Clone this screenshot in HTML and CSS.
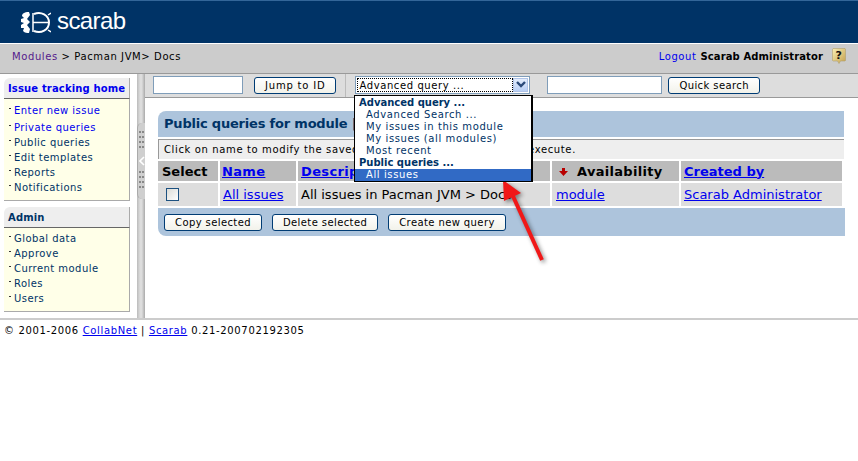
FILE: index.html
```html
<!DOCTYPE html>
<html>

<head>
    <title>Scarab - Public queries</title>

    <link rel="stylesheet" href="styles.css">
</head>

<body>
    <div class="banner">
        <svg class="beetle" width="31" height="23" viewBox="0 0 31 23">
            <path d="M9 1 C4 1 2 3 2 5 L4 7 L1 8 L1 11 L4 12 L1 14 L1 17 L4 17 L3 20 C5 22 7 22 9 22 L10 18 L7 14 L10 11 L7 8 L10 4 Z" fill="#fff"/>
            <path d="M14 3 C21 0 29 4 29 11.5 C29 19 21 23 14 20" fill="none" stroke="#fff" stroke-width="2"/>
            <path d="M13 2 V21" stroke="#fff" stroke-width="1.5"/>
            <path d="M13 11.5 H28" stroke="#fff" stroke-width="1.5"/>
            <path d="M28 4 L31 2 M28 19 L31 21" stroke="#fff" stroke-width="1.5"/>
        </svg>
        <span class="wordmark">scarab</span>
    </div>

    <div class="crumbs">
        <div><a class="visited" href="#">Modules</a> &gt; Pacman JVM&gt; Docs</div>
        <div class="user">
            <a class="plain" href="#">Logout</a> <b>Scarab Administrator</b>
            <svg class="help" width="14" height="16" viewBox="0 0 14 16">
                <defs>
                    <linearGradient id="helpFill" x1="0" y1="0" x2="1" y2="1">
                        <stop offset="0" stop-color="#f8eeb4"/>
                        <stop offset="1" stop-color="#c4a04c"/>
                    </linearGradient>
                </defs>
                <path d="M1 0.5 H13 L13.5 1 V12.5 L13 13 H8.5 L7 15.5 L5.5 13 H1 L0.5 12.5 V1 Z" fill="url(#helpFill)" stroke="#b0a070" stroke-width="0.6"/>
                <text x="7" y="11" text-anchor="middle" class="help-mark">?</text>
            </svg>
        </div>
    </div>

    <div class="middle">
        <div class="side">
            <div class="box">
                <div class="box-head"><a class="plain" href="#">Issue tracking home</a></div>
                <ul class="box-list first-list">
                    <li class="gap"><a class="plain" href="#">Enter new issue</a></li>
                    <li><a class="plain" href="#">Private queries</a></li>
                    <li><a href="#">Public queries</a></li>
                    <li><a href="#">Edit templates</a></li>
                    <li><a href="#">Reports</a></li>
                    <li><a href="#">Notifications</a></li>
                </ul>
            </div>
            <div class="box">
                <div class="box-head">Admin</div>
                <ul class="box-list">
                    <li><a href="#">Global data</a></li>
                    <li><a href="#">Approve</a></li>
                    <li><a href="#">Current module</a></li>
                    <li><a href="#">Roles</a></li>
                    <li><a href="#">Users</a></li>
                </ul>
            </div>
        </div>

        <div class="splitter">
            <div class="handle">
                <div class="dots"></div>
                <svg class="chevron" width="6" height="10" viewBox="0 0 6 10"><path d="M5 1 L1 5 L5 9" fill="none" stroke="#fff" stroke-width="1.6"/></svg>
                <div class="dots"></div>
            </div>
        </div>

        <div class="main">
            <div class="toolbar">
                <input class="field id-field" type="text">
                <button class="btn btn-jump">Jump to ID</button>
                <div class="tool-sep"></div>
                <div class="select">
                    <span class="select-text">Advanced query ...</span>
                    <span class="select-arrow">
                        <svg width="12" height="8" viewBox="0 0 12 8"><path d="M2 1 L6 5 L10 1" fill="none" stroke="#2a4a7a" stroke-width="2.4"/></svg>
                    </span>
                </div>
                <input class="field search-field" type="text">
                <button class="btn">Quick search</button>
            </div>

            <div class="menu">
                <div class="menu-group">Advanced query ...</div>
                <div class="menu-item">Advanced Search ...</div>
                <div class="menu-item">My issues in this module</div>
                <div class="menu-item">My issues (all modules)</div>
                <div class="menu-item">Most recent</div>
                <div class="menu-group">Public queries ...</div>
                <div class="menu-item current">All issues</div>
            </div>

            <div class="panel">
                <h2 class="panel-head">Public queries for module |</h2>
                <div class="note">Click on name to modify the saved query, or on the 'Run' link to execute.</div>
                <table class="queries">
                    <tr>
                        <th class="col-select">Select</th>
                        <th class="col-name"><a href="#">Name</a></th>
                        <th class="col-desc"><a href="#">Descrip</a></th>
                        <th class="col-avail">
                            <svg class="sort-arrow" width="9" height="8" viewBox="0 0 9 8"><path d="M3 0 H6 V3 H9 L4.5 8 L0 3 H3 Z" fill="#b80000"/></svg>Availability
                        </th>
                        <th class="col-by"><a href="#">Created by</a></th>
                    </tr>
                    <tr>
                        <td class="cell-check"><span class="check"></span></td>
                        <td><a href="#">All issues</a></td>
                        <td>All issues in Pacman JVM &gt; Docs</td>
                        <td class="cell-avail"><a href="#">module</a></td>
                        <td><a href="#">Scarab Administrator</a></td>
                    </tr>
                </table>
                <div class="actions">
                    <button class="btn">Copy selected</button>
                    <button class="btn">Delete selected</button>
                    <button class="btn">Create new query</button>
                </div>
            </div>

            <svg class="pointer" width="64" height="94" viewBox="0 0 64 94">
                <path d="M21 14 L51 80" stroke="#f01818" stroke-width="4"/>
                <path d="M12 0 L13 21 L30 13 Z" fill="#f01818"/>
            </svg>
        </div>
    </div>

    <div class="footer">
        &copy; 2001-2006 <a href="#">CollabNet</a> | <a href="#">Scarab</a> 0.21-200702192305
    </div>
</body>

</html>
```

FILE: styles.css
```css
body {
    margin: 0;
    background-color: #ffffff;
    color: #000000;
    font-family: "DejaVu Sans", Verdana, sans-serif;
    font-size: 10px;
    letter-spacing: 0.45px;
}

a {
    color: #0000ee;
}

.banner {
    height: 42px;
    border-top: 1px solid #336699;
    background-color: #003366;
    display: flex;
    align-items: center;
    padding-left: 20px;
    gap: 6px;
}

.wordmark {
    color: #ffffff;
    font-family: "Liberation Sans", Arial, sans-serif;
    font-size: 24px;
    letter-spacing: -0.6px;
    padding-bottom: 2px;
}

.crumbs {
    height: 30px;
    margin-top: 1px;
    background-color: #cccccc;
    border-bottom: 1px solid #999999;
    box-sizing: border-box;
    display: flex;
    justify-content: space-between;
    align-items: center;
    padding: 0 12px 5px 12px;
    letter-spacing: 0.6px;
}

.crumbs a {
    text-decoration: none;
}

.crumbs b {
    letter-spacing: 0.1px;
}

.visited {
    color: #551a8b;
}

.plain {
    text-decoration: none;
}

.user {
    display: flex;
    align-items: center;
    gap: 4px;
}

.help {
    margin-left: 5px;
}

.help-mark {
    font-size: 11px;
    font-weight: bold;
    fill: #111111;
}

.middle {
    display: flex;
    height: 244px;
    border-bottom: 2px solid #cccccc;
}

.side {
    width: 137px;
    flex: none;
    padding: 4px 0 0 4px;
    box-sizing: border-box;
}

.box {
    width: 126px;
    margin-bottom: 6px;
}

.box-head {
    height: 21px;
    line-height: 21px;
    box-sizing: border-box;
    padding-left: 4px;
    background-color: #eeeeee;
    border-bottom: 1px solid #666666;
    border-right: 1px solid #aaaaaa;
    border-top-left-radius: 6px;
    color: #003366;
    font-weight: bold;
    letter-spacing: 0.15px;
}

.box-head a {
    color: #0000ee;
}

.box-list {
    list-style: none;
    margin: 0;
    padding: 3px 0 5px 6px;
    background-color: #ffffe8;
    border-bottom: 1px solid #aaaaaa;
    border-right: 1px solid #aaaaaa;
}

.first-list {
    padding-top: 4px;
}

.box-list li {
    height: 15px;
    line-height: 15px;
    position: relative;
}

.box-list li::before {
    content: "";
    position: absolute;
    left: -1px;
    top: 5px;
    width: 2px;
    height: 1px;
    background-color: #333333;
}

.box-list li.gap {
    height: 17px;
}

.box-list li a {
    margin-left: 4px;
    text-decoration: none;
    color: #003366;
}

.box-list li a.plain {
    color: #0000ee;
}

.splitter {
    width: 8px;
    flex: none;
    background: linear-gradient(90deg, #bbbbbb, #dddddd 40%, #dddddd 60%, #aaaaaa);
    box-sizing: border-box;
    padding-top: 49px;
}

.handle {
    height: 76px;
    background-color: #cfcfcf;
    border-left: 1px solid #aaaaaa;
    border-radius: 5px 0 0 5px;
    display: flex;
    flex-direction: column;
    align-items: center;
    justify-content: space-between;
    padding: 8px 0;
    box-sizing: border-box;
}

.dots {
    width: 5px;
    height: 20px;
    background-image: linear-gradient(90deg, #888888 2px, transparent 2px, transparent 3px, #888888 3px);
    -webkit-mask-image: linear-gradient(#000 2px, transparent 2px);
    mask-image: linear-gradient(#000 2px, transparent 2px);
    -webkit-mask-size: 5px 5px;
    mask-size: 5px 5px;
}

.main {
    flex: 1;
    position: relative;
}

.toolbar {
    height: 24px;
    box-sizing: border-box;
    background-color: #dddddd;
    border-bottom: 1px solid #999999;
    display: flex;
    align-items: center;
    padding: 0 0 1px 8px;
}

.field {
    height: 18px;
    box-sizing: border-box;
    border: 1px solid #7f9db9;
    background-color: #ffffff;
    padding: 0;
}

.id-field {
    width: 90px;
}

.search-field {
    width: 115px;
    margin-left: 17px;
}

.btn {
    height: 17px;
    padding: 1px 10px 0;
    background: linear-gradient(#ffffff, #f2f2ea);
    border: 1px solid #003c74;
    border-radius: 3px;
    font-family: inherit;
    font-size: 10px;
    letter-spacing: 0.4px;
    color: #000000;
}

.btn-jump {
    letter-spacing: 0.8px;
}

.toolbar .btn {
    margin-left: 6px;
}

.toolbar .btn-jump {
    margin-left: 11px;
}

.tool-sep {
    width: 1px;
    height: 23px;
    background-color: #bbbbbb;
    margin: 0 9px 0 9px;
}

.select {
    width: 175px;
    height: 18px;
    box-sizing: border-box;
    border: 1px solid #7f9db9;
    background-color: #ffffff;
    display: flex;
    padding: 1px;
}

.select-text {
    flex: 1;
    border: 1px dotted #000000;
    line-height: 14px;
    padding-left: 1px;
    letter-spacing: 0.6px;
}

.select-arrow {
    width: 15px;
    background: linear-gradient(#e4edfc, #b9cff5);
    border: 1px solid #b0c4e8;
    box-sizing: border-box;
    display: flex;
    align-items: center;
    justify-content: center;
}

.menu {
    position: absolute;
    left: 209px;
    top: 21px;
    width: 179px;
    box-sizing: border-box;
    background-color: #ffffff;
    border: 1px solid #000000;
    border-width: 1px 2px 1px 1px;
    padding-top: 1px;
    z-index: 2;
    line-height: 12px;
    letter-spacing: 0.6px;
}

.menu-group {
    font-weight: bold;
    color: #003366;
    padding-left: 4px;
    letter-spacing: 0;
}

.menu-item {
    padding-left: 11px;
    color: #003366;
}

.menu-item.current {
    background-color: #316ac5;
    color: #ffffff;
}

.panel {
    margin: 13px 0 0 13px;
    width: 686px;
    font-size: 13px;
    letter-spacing: 0;
}

.panel-head {
    margin: 0;
    height: 26px;
    line-height: 26px;
    padding-left: 6px;
    background-color: #adc4dc;
    border-top-left-radius: 8px;
    color: #003366;
    font-size: 13px;
    letter-spacing: -0.2px;
    white-space: nowrap;
}

.note {
    margin-top: 2px;
    height: 20px;
    line-height: 20px;
    box-sizing: border-box;
    padding-left: 5px;
    background-color: #eeeeee;
    border-top: 1px solid #999999;
    border-left: 1px solid #999999;
    font-size: 10px;
    letter-spacing: 0.63px;
    white-space: nowrap;
}

.queries {
    width: 100%;
    table-layout: fixed;
    border-collapse: collapse;
}

.queries th,
.queries td {
    border: solid #ffffff;
    border-width: 2px 2px 2px 0;
    padding: 0 0 0 3px;
    text-align: left;
}

.queries th {
    height: 20px;
    background-color: #bbbbbb;
    letter-spacing: 0.35px;
}

.queries td {
    height: 22px;
    padding-bottom: 1px;
    background-color: #dddddd;
}

.queries .col-select {
    width: 56px;
    padding-left: 4px;
    letter-spacing: 0;
}

.queries .col-name {
    width: 74px;
    padding-left: 2px;
}

.col-desc {
    width: 249px;
}

.queries .col-avail {
    width: 120px;
    padding-left: 7px;
    letter-spacing: 0.3px;
}

.queries .col-by {
    letter-spacing: 0;
}

.sort-arrow {
    margin-right: 9px;
}

.queries .cell-check {
    padding-left: 4px;
}

.queries .cell-avail {
    padding-left: 4px;
}

.check {
    display: block;
    width: 13px;
    height: 13px;
    margin-left: 4px;
    border: 1px solid #1c5180;
    box-sizing: border-box;
    background: linear-gradient(135deg, #dcdcd7, #ffffff);
}

.actions {
    height: 28px;
    background-color: #adc4dc;
    border-bottom-left-radius: 8px;
    display: flex;
    align-items: center;
    gap: 10px;
    padding-left: 6px;
    margin-right: -1px;
}

.pointer {
    position: absolute;
    left: 346px;
    top: 106px;
    filter: drop-shadow(2px 2px 2px rgba(0, 0, 0, 0.45));
}

.footer {
    padding: 4px 0 0 4px;
    line-height: 14px;
    letter-spacing: 0.65px;
}
```
